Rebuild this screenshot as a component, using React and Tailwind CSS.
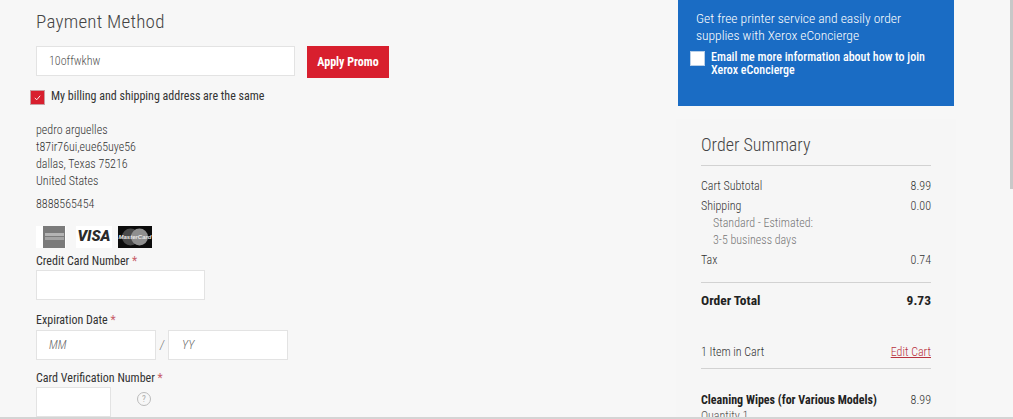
import React from "react";

const Req = () => <span className="text-[#c8606a]"> *</span>;

function Amex() {
  return (
    <div className="w-[30px] h-[22px] bg-white flex items-center justify-end pr-[1px]">
      <div className="w-[22px] h-[22px] bg-[#7b7b7b] flex flex-col items-center justify-center gap-[1px]">
        <div className="w-[19px] h-[3px] bg-[#b4b4b4]" />
        <div className="w-[19px] h-[3px] bg-[#a4a4a4]" />
      </div>
    </div>
  );
}

function Visa() {
  return (
    <div className="w-[36px] h-[22px] bg-white flex items-center justify-center">
      <span className="text-[15px] leading-none font-black italic text-[#2b2b2b] font-['Roboto',sans-serif] [font-stretch:100%]">VISA</span>
    </div>
  );
}

function Master() {
  return (
    <svg width="34" height="22" viewBox="0 0 34 22" className="block">
      <rect width="34" height="22" fill="#0c0c0c" />
      <circle cx="12.5" cy="11" r="8.5" fill="#4a4a4a" />
      <circle cx="21.5" cy="11" r="8.5" fill="#8f8f8f" />
      <text x="17" y="13" textAnchor="middle" fontSize="6" fontWeight="700" fontStyle="italic" fill="#e8e8e8" fontFamily="Liberation Sans, sans-serif">MasterCard</text>
    </svg>
  );
}

function Row({ label, value, className = "" }) {
  return (
    <div className={`flex justify-between text-[12px] leading-[17px] font-light text-[#333] ${className}`}>
      <span>{label}</span>
      <span>{value}</span>
    </div>
  );
}

export default function App() {
  return (
    <div className="h-[419px] w-[1013px] overflow-hidden relative bg-[#f7f7f7] font-['Roboto',sans-serif] [font-stretch:85%] flex">
      <div className="w-[678px] shrink-0 pl-[36px]">
        <h2 className="mt-[10px] text-[19px] leading-[24px] font-light text-[#444] tracking-[0.25px]">Payment Method</h2>
        <div className="mt-[12px] flex gap-[12px]">
          <div className="w-[259px] h-[30px] bg-white border border-[#e3e3e3] pl-[12px] flex items-center text-[12px] font-light text-[#555]">10offwkhw</div>
          <div className="w-[82px] h-[32px] -mt-[0.5px] bg-[#d81f2e] text-white text-[12px] font-bold flex items-center justify-center">Apply Promo</div>
        </div>
        <div className="mt-[11px] -ml-[6px] flex items-start gap-[6px]">
          <div className="w-[15px] h-[15px] mt-[1px] bg-[#d81f2e] border border-[#c9a0a4] flex items-center justify-center">
            <svg width="9" height="9" viewBox="0 0 10 10" fill="none" stroke="#fff" strokeWidth="1">
              <path d="M2 5.5 L4.2 7.5 L8 3" />
            </svg>
          </div>
          <span className="text-[12px] leading-[15px] font-normal text-[#333]">My billing and shipping address are the same</span>
        </div>
        <div className="mt-[17px] text-[12px] leading-[17px] font-light text-[#333]">
          <div>pedro arguelles</div>
          <div>t87ir76ui,eue65uye56</div>
          <div>dallas, Texas 75216</div>
          <div>United States</div>
          <div className="mt-[6px]">8888565454</div>
        </div>
        <div className="mt-[13px] flex">
          <Amex />
          <div className="ml-[10px]"><Visa /></div>
          <div className="ml-[6px]"><Master /></div>
        </div>
        <div className="mt-[5px] text-[12px] leading-[17px] font-normal text-[#333]">Credit Card Number<Req /></div>
        <div className="w-[169px] h-[30px] bg-white border border-[#e3e3e3]" />
        <div className="mt-[12px] text-[12px] leading-[17px] font-normal text-[#333]">Expiration Date<Req /></div>
        <div className="mt-[1px] flex items-center">
          <div className="w-[120px] h-[30px] bg-white border border-[#e3e3e3] pl-[12px] flex items-center text-[12px] font-light italic text-[#666]">MM</div>
          <span className="w-[12px] text-center text-[12px] font-light italic text-[#666]">/</span>
          <div className="w-[120px] h-[30px] bg-white border border-[#e3e3e3] pl-[13px] flex items-center text-[12px] font-light italic text-[#666]">YY</div>
        </div>
        <div className="mt-[10px] text-[12px] leading-[17px] font-normal text-[#333]">Card Verification Number<Req /></div>
        <div className="flex items-center">
          <div className="w-[75px] h-[30px] bg-white border border-[#e3e3e3]" />
          <div className="ml-[26px] -mt-[5px] w-[14px] h-[14px] rounded-full border border-[#bbb] flex items-center justify-center text-[9px] leading-none text-[#aaa]">?</div>
        </div>
      </div>

      <div className="w-[276px] shrink-0">
        <div className="h-[106px] bg-[#1a6cc4] text-white pt-[10px] pl-[18px] pr-[20px]">
          <div className="text-[13.5px] leading-[17px] font-light">Get free printer service and easily order supplies with Xerox eConcierge</div>
          <div className="mt-[5px] -ml-[6px] flex items-start gap-[6px]">
            <div className="w-[15px] h-[15px] shrink-0 mt-[2px] bg-white border border-[#b8cfe8]" />
            <span className="text-[12px] leading-[13px] font-medium mt-[2px]">Email me more information about how to join Xerox eConcierge</span>
          </div>
        </div>
        <div className="mt-[13px] -mx-[2px] h-[300px] bg-[#f6f6f6] pt-[14px] px-[25px]">
          <h2 className="text-[18px] leading-[24px] font-light text-[#444]">Order Summary</h2>
          <div className="mt-[8px] border-t border-[#d2d2d2] pt-[12px]">
            <Row label="Cart Subtotal" value="8.99" />
            <Row label="Shipping" value="0.00" className="mt-[3px]" />
            <div className="pl-[12px] text-[12px] leading-[17px] font-light text-[#777]">
              <div>Standard - Estimated:</div>
              <div>3-5 business days</div>
            </div>
            <Row label="Tax" value="0.74" className="mt-[3px]" />
          </div>
          <div className="mt-[13px] border-t border-[#d2d2d2] pt-[9px] flex justify-between text-[13.5px] leading-[17px] font-bold text-[#222]">
            <span>Order Total</span>
            <span>9.73</span>
          </div>
          <div className="mt-[35px] flex justify-between text-[12px] leading-[17px] font-light text-[#333]">
            <span>1 Item in Cart</span>
            <span className="text-[#b8323e] underline">Edit Cart</span>
          </div>
          <div className="mt-[7px] border-t border-[#d2d2d2] pt-[23px] flex justify-between text-[12px] leading-[17px] text-[#222]">
            <span className="font-bold">Cleaning Wipes (for Various Models)</span>
            <span className="font-light text-[#333]">8.99</span>
          </div>
          <div className="text-[12px] leading-[15px] font-light text-[#555]">Quantity 1</div>
        </div>
      </div>
      <div className="absolute right-0 top-0 w-[3px] h-[189px] bg-[#c8c8c8]" />
      <div className="absolute left-0 right-0 bottom-0 h-[2px] bg-[#d4d4d4]" />
    </div>
  );
}
